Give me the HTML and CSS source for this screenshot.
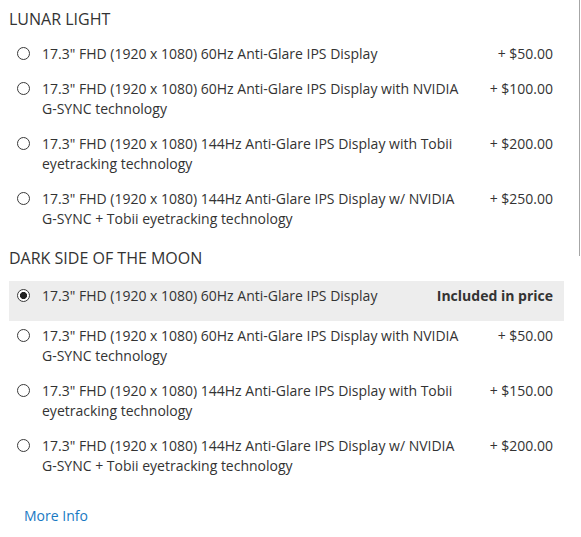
FILE: index.html
```html
<!DOCTYPE html>
<html>
<head>
<meta charset="utf-8">
<link rel="stylesheet" href="styles.css">
</head>
<body>
<div class="page">
  <section class="group">
    <h3 class="group-title">LUNAR LIGHT</h3>
    <div class="options">
      <label class="row"><input type="radio" name="lunar" class="radio"><span class="label">17.3" FHD (1920 x 1080) 60Hz Anti-Glare IPS Display</span><span class="price">+ $50.00</span></label>
      <label class="row"><input type="radio" name="lunar" class="radio"><span class="label">17.3" FHD (1920 x 1080) 60Hz Anti-Glare IPS Display with NVIDIA G-SYNC technology</span><span class="price">+ $100.00</span></label>
      <label class="row"><input type="radio" name="lunar" class="radio"><span class="label">17.3" FHD (1920 x 1080) 144Hz Anti-Glare IPS Display with Tobii eyetracking technology</span><span class="price">+ $200.00</span></label>
      <label class="row"><input type="radio" name="lunar" class="radio"><span class="label">17.3" FHD (1920 x 1080) 144Hz Anti-Glare IPS Display w/ NVIDIA G-SYNC + Tobii eyetracking technology</span><span class="price">+ $250.00</span></label>
    </div>
  </section>
  <section class="group group-second">
    <h3 class="group-title">DARK SIDE OF THE MOON</h3>
    <div class="options">
      <label class="row selected"><input type="radio" name="dark" class="radio" checked><span class="label">17.3" FHD (1920 x 1080) 60Hz Anti-Glare IPS Display</span><span class="price included">Included in price</span></label>
      <label class="row"><input type="radio" name="dark" class="radio"><span class="label">17.3" FHD (1920 x 1080) 60Hz Anti-Glare IPS Display with NVIDIA G-SYNC technology</span><span class="price">+ $50.00</span></label>
      <label class="row"><input type="radio" name="dark" class="radio"><span class="label">17.3" FHD (1920 x 1080) 144Hz Anti-Glare IPS Display with Tobii eyetracking technology</span><span class="price">+ $150.00</span></label>
      <label class="row"><input type="radio" name="dark" class="radio"><span class="label">17.3" FHD (1920 x 1080) 144Hz Anti-Glare IPS Display w/ NVIDIA G-SYNC + Tobii eyetracking technology</span><span class="price">+ $200.00</span></label>
    </div>
  </section>
  <a class="more-info" href="#">More Info</a>
</div>
<div class="scroll-edge"></div>
</body>
</html>
```
FILE: styles.css
```css
html, body {
  margin: 0;
  padding: 0;
  background: #fff;
}
body {
  font-family: "Open Sans", "Liberation Sans", sans-serif;
  font-size: 14px;
  line-height: 20px;
  color: #333;
}
.page {
  width: 555px;
  padding: 8px 0 0 9px;
}
.group-title {
  margin: 0;
  font-size: 16px;
  line-height: 22px;
  font-weight: 400;
  color: #333;
}
.options {
  display: flex;
  flex-direction: column;
  margin-top: 9px;
}
.group-second {
  margin-top: 8px;
}
.group-second .options {
  margin-top: 12px;
}
.row {
  display: flex;
  align-items: flex-start;
  padding: 5px 11px 10px 8px;
  cursor: pointer;
}
.row.selected {
  background: #ededed;
  padding-bottom: 15px;
}
.radio {
  appearance: none;
  -webkit-appearance: none;
  flex: none;
  width: 13px;
  height: 13px;
  margin: 3px 12px 0 0;
  border: 1px solid #3a3a3a;
  border-radius: 50%;
  background: #fff;
  box-sizing: border-box;
}
.radio:checked {
  background: radial-gradient(circle, #222 0 3.3px, #fff 3.8px);
}
.label {
  flex: 1;
  min-width: 0;
}
.price {
  flex: none;
  padding-left: 24px;
  text-align: right;
  white-space: nowrap;
}
.price.included {
  font-weight: 700;
}
.more-info {
  display: inline-block;
  margin: 20px 0 0 15px;
  color: #1979c3;
  text-decoration: none;
}
.scroll-edge {
  position: fixed;
  top: 0;
  left: 579px;
  width: 1px;
  height: 256px;
  background: #a6a6a6;
}
```
